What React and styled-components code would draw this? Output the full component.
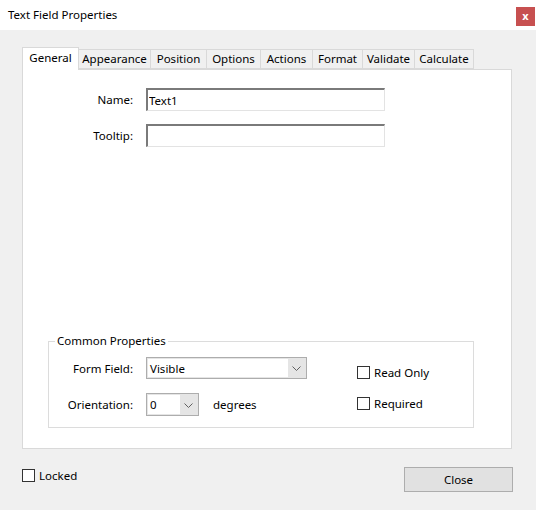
import React, { useState } from "react";
import styled, { createGlobalStyle } from "styled-components";

const GlobalStyle = createGlobalStyle`
  html, body {
    margin: 0;
    padding: 0;
    background: #f0f0f0;
  }
  * {
    box-sizing: border-box;
  }
  body {
    font-family: "Segoe UI", "Noto Sans", sans-serif;
    font-size: 11.5px;
    color: #000;
  }
`;

// widths measured edge to edge, right border included
const tabs = [
  { label: "General", width: 57 },
  { label: "Appearance", width: 72 },
  { label: "Position", width: 56 },
  { label: "Options", width: 54 },
  { label: "Actions", width: 52 },
  { label: "Format", width: 50 },
  { label: "Validate", width: 52 },
  { label: "Calculate", width: 59 },
];

const App = () => {
  const [active, setActive] = useState(0);
  const [name, setName] = useState("Text1");
  const [tooltip, setTooltip] = useState("");
  const [readOnly, setReadOnly] = useState(false);
  const [required, setRequired] = useState(false);
  const [locked, setLocked] = useState(false);

  return (
    <Window>
      <GlobalStyle />
      <TitleBar>
        <Title>Text Field Properties</Title>
        <CloseX>x</CloseX>
      </TitleBar>

      <Body>
        <TabStrip>
          {tabs.map((t, i) => (
            <Tab
              key={t.label}
              $active={i === active}
              $w={t.width}
              onClick={() => setActive(i)}
            >
              {t.label}
            </Tab>
          ))}
        </TabStrip>

        <Panel>
          <FieldGrid>
            <Label>Name:</Label>
            <TextInput value={name} onChange={(e) => setName(e.target.value)} />
            <Label>Tooltip:</Label>
            <TextInput
              value={tooltip}
              onChange={(e) => setTooltip(e.target.value)}
            />
          </FieldGrid>

          <Group>
            <Legend>Common Properties</Legend>
            <GroupInner>
              <GroupGrid>
                <Label>Form Field:</Label>
                <Combo $w={161}>
                  <ComboText>Visible</ComboText>
                  <ComboArrow>
                    <Chevron />
                  </ComboArrow>
                </Combo>
                <Label>Orientation:</Label>
                <ComboRow>
                  <Combo $w={53} $h={23}>
                    <ComboText>0</ComboText>
                    <ComboArrow>
                      <Chevron />
                    </ComboArrow>
                  </Combo>
                  <span>degrees</span>
                </ComboRow>
              </GroupGrid>

              <CheckColumn>
                <CheckRow onClick={() => setReadOnly(!readOnly)}>
                  <Box $on={readOnly} />
                  Read Only
                </CheckRow>
                <CheckRow onClick={() => setRequired(!required)}>
                  <Box $on={required} />
                  Required
                </CheckRow>
              </CheckColumn>
            </GroupInner>
          </Group>
        </Panel>

        <Footer>
          <LockedRow onClick={() => setLocked(!locked)}>
            <Box $on={locked} />
            Locked
          </LockedRow>
          <Button>Close</Button>
        </Footer>
      </Body>
    </Window>
  );
};

const Chevron = () => (
  <svg width="9" height="5" viewBox="0 0 9 5">
    <path d="M0.5 0.5 L4.5 4.5 L8.5 0.5" fill="none" stroke="#606060" strokeWidth="1" />
  </svg>
);

export default App;

const Window = styled.div`
  width: 536px;
  height: 510px;
  display: flex;
  flex-direction: column;
  background: #f0f0f0;
`;

const TitleBar = styled.div`
  height: 30px;
  background: #fff;
  display: flex;
  align-items: center;
  justify-content: space-between;
  padding: 2px 1px 0 8px;
`;

const Title = styled.div`
  font-size: 11.5px;
  margin-top: -3px;
`;

const CloseX = styled.div`
  width: 19px;
  height: 19px;
  background: #c75050;
  color: #fff;
  font-size: 11px;
  font-weight: bold;
  display: flex;
  align-items: center;
  justify-content: center;
  padding-bottom: 2px;
`;

const Body = styled.div`
  display: flex;
  flex-direction: column;
  padding: 17px 24px 0 22px;
`;

const TabStrip = styled.div`
  display: flex;
  align-items: flex-end;
  height: 22px;
  position: relative;
  z-index: 1;
`;

const Tab = styled.div`
  width: ${({ $w }) => $w}px;
  height: ${({ $active }) => ($active ? "23px" : "20px")};
  margin-bottom: ${({ $active }) => ($active ? "-1px" : "0")};
  background: ${({ $active }) => ($active ? "#fff" : "#f0f0f0")};
  border: 1px solid #d9d9d9;
  border-left: none;
  border-bottom: ${({ $active }) => ($active ? "none" : "1px solid #d9d9d9")};
  display: flex;
  justify-content: center;
  padding-top: ${({ $active }) => ($active ? "2px" : "1px")};
  cursor: default;
  white-space: nowrap;

  &:first-child {
    border-left: 1px solid #d9d9d9;
  }
`;

const Panel = styled.div`
  width: 490px;
  height: 380px;
  background: #fff;
  border: 1px solid #d9d9d9;
  display: flex;
  flex-direction: column;
  padding: 18px 0 20px 25px;
`;

const FieldGrid = styled.div`
  display: grid;
  grid-template-columns: 85px 239px;
  column-gap: 13px;
  row-gap: 13px;
  align-items: center;
`;

const Label = styled.div`
  text-align: right;
`;

const TextInput = styled.input`
  height: 23px;
  width: 239px;
  border-style: solid;
  border-width: 2px 1px 1px 2px;
  border-color: #7a7a7a #e3e3e3 #e3e3e3 #7a7a7a;
  outline: none;
  padding: 0 0 0 1px;
  font: inherit;
  background: #fff;
`;

const Group = styled.fieldset`
  margin: auto 0 0 0;
  width: 426px;
  border: 1px solid #dcdcdc;
  padding: 8px 0 11px 0;
`;

const Legend = styled.legend`
  margin-left: 6px;
  padding: 0 2px;
  line-height: 16px;
`;

const GroupInner = styled.div`
  display: flex;
  align-items: flex-start;
`;

const GroupGrid = styled.div`
  display: grid;
  grid-template-columns: 84px auto;
  column-gap: 13px;
  row-gap: 14px;
  align-items: center;
`;

const ComboRow = styled.div`
  display: flex;
  align-items: center;
  gap: 14px;
`;

const Combo = styled.div`
  width: ${({ $w }) => $w}px;
  height: ${({ $h }) => $h || 22}px;
  border: 1px solid #adadad;
  background: #e5e5e5;
  display: flex;
  padding: 1px;
`;

const ComboText = styled.div`
  flex: 1;
  background: #fff;
  display: flex;
  align-items: center;
  padding-left: 2px;
`;

const ComboArrow = styled.div`
  width: 17px;
  display: flex;
  align-items: center;
  justify-content: center;
  padding-top: 1px;
`;

const CheckColumn = styled.div`
  display: flex;
  flex-direction: column;
  gap: 13px;
  margin: 6px 0 0 50px;
`;

const CheckRow = styled.div`
  display: flex;
  align-items: center;
  gap: 4px;
  height: 18px;
  cursor: default;
`;

const Box = styled.span`
  width: 13px;
  height: 13px;
  border: 1px solid #333;
  background: ${({ $on }) => ($on ? "#333" : "#fff")};
  box-shadow: inset 0 0 0 2px #fff;
`;

const Footer = styled.div`
  display: flex;
  justify-content: space-between;
  align-items: flex-start;
  margin-right: -1px;
`;

const LockedRow = styled(CheckRow)`
  margin-top: 17px;
`;

const Button = styled.button`
  margin-top: 18px;
  width: 109px;
  height: 25px;
  background: #e1e1e1;
  border: 1px solid #adadad;
  font: inherit;
  padding: 0;
`;
